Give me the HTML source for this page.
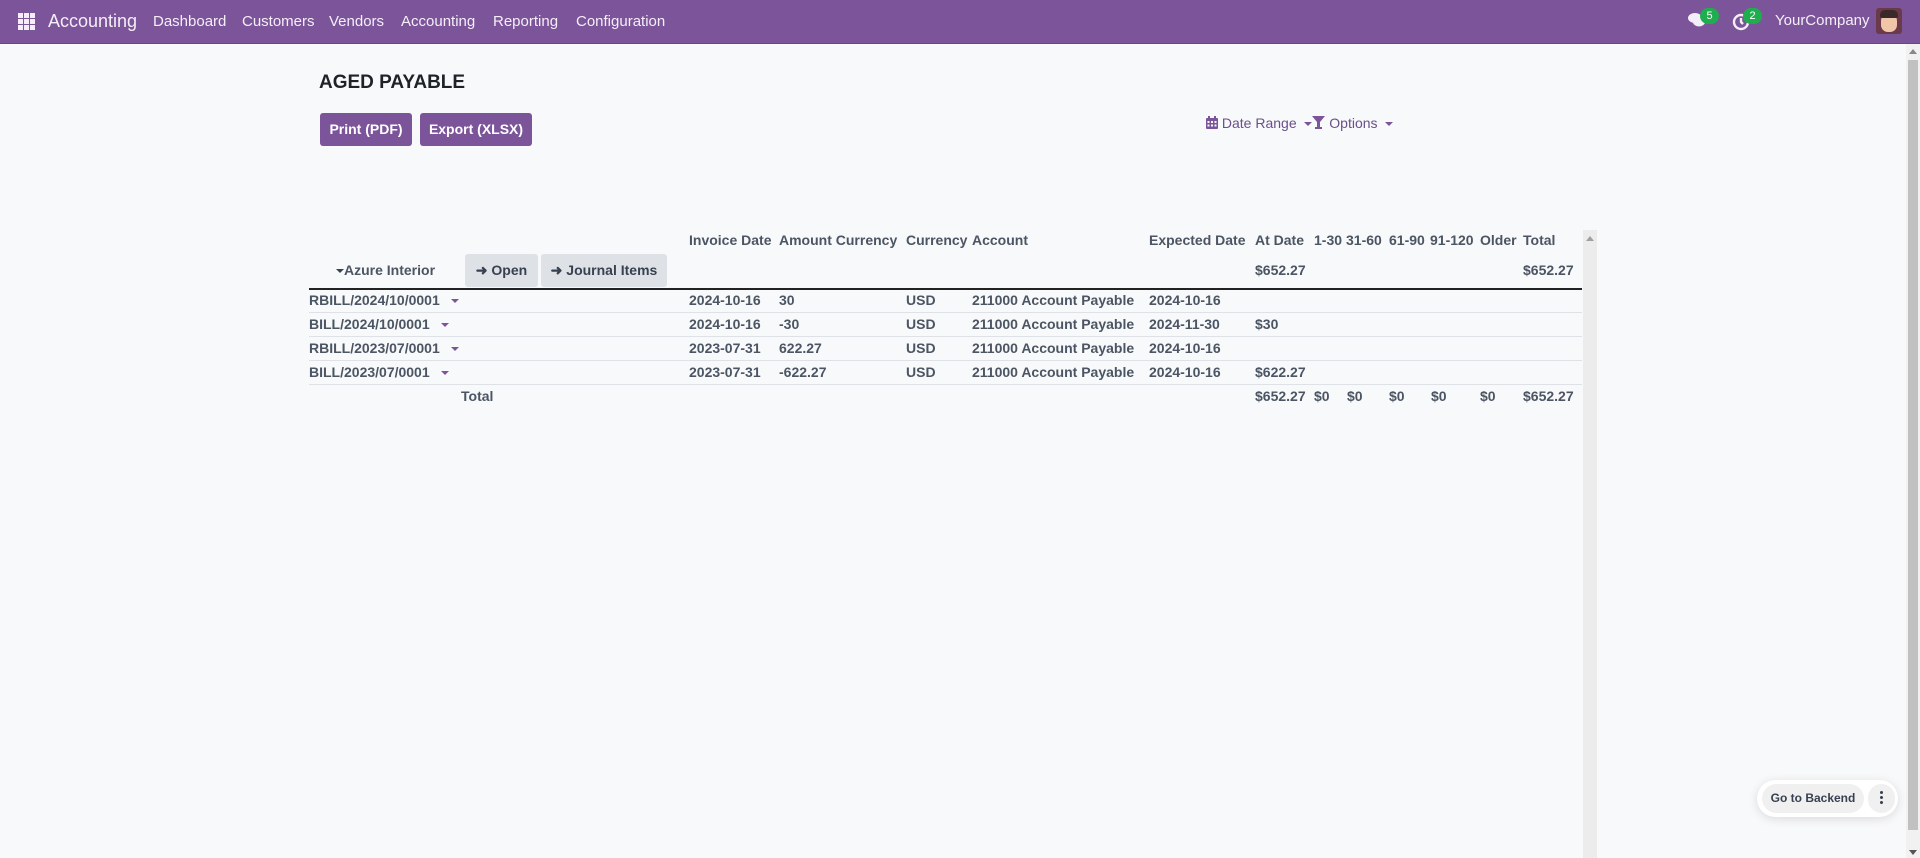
<!DOCTYPE html>
<html><head><meta charset="utf-8"><style>
*{box-sizing:border-box;margin:0;padding:0}
body{width:1920px;height:858px;overflow:hidden;background:#f8f9fa;font-family:"Liberation Sans",sans-serif;color:#374151;font-size:14px;position:relative}
.nav{position:absolute;left:0;top:0;width:1920px;height:44px;background:#7c5499;color:#fff;border-bottom:1px solid #6a4584}
.nav span{position:absolute;top:13px;font-size:15px;color:#f3eef7}
.a{position:absolute;white-space:nowrap}
.btn{position:absolute;background:#7c5499;color:#fff;font-weight:bold;border-radius:3px;font-size:14px;text-align:center;line-height:33px;height:33px;top:113px}
.gbtn{position:absolute;background:#dee2e6;color:#374151;font-weight:bold;border-radius:3px;top:254px;height:33px;line-height:33px;text-align:center}
.line{position:absolute;left:309px;width:1273px;height:1px;background:#dee2e6}
.caret{display:inline-block;width:0;height:0;border-left:4px solid transparent;border-right:4px solid transparent;border-top:4px solid #7c5499;vertical-align:middle}
.h{top:232px;font-weight:bold;color:#4b5563}
</style></head><body>
<div class="nav">
 <svg style="position:absolute;left:18px;top:13px" width="17" height="17" viewBox="0 0 17 17" fill="#f3eef7"><rect x="0" y="0" width="5" height="5"/><rect x="6" y="0" width="5" height="5"/><rect x="12" y="0" width="5" height="5"/><rect x="0" y="6" width="5" height="5"/><rect x="6" y="6" width="5" height="5"/><rect x="12" y="6" width="5" height="5"/><rect x="0" y="12" width="5" height="5"/><rect x="6" y="12" width="5" height="5"/><rect x="12" y="12" width="5" height="5"/></svg>
 <span style="left:48px;top:11px;font-size:18px">Accounting</span>
 <span style="left:153px">Dashboard</span>
 <span style="left:242px">Customers</span>
 <span style="left:329px">Vendors</span>
 <span style="left:401px">Accounting</span>
 <span style="left:493px">Reporting</span>
 <span style="left:576px">Configuration</span>
 <svg style="position:absolute;left:1688px;top:12px" width="18" height="16" viewBox="0 0 18 16" fill="#f3eef7"><ellipse cx="7" cy="6" rx="7" ry="5"/><ellipse cx="11" cy="10" rx="6" ry="4.5"/></svg>
 <div style="position:absolute;left:1700px;top:8px;width:19px;height:16px;border-radius:8px;background:#1fae4e;color:#fff;font-size:11px;text-align:center;line-height:16px">5</div>
 <svg style="position:absolute;left:1732px;top:13px" width="18" height="18" viewBox="0 0 18 18" fill="none" stroke="#f3eef7" stroke-width="2.4"><circle cx="9" cy="9" r="7"/><path d="M9 5v4l2 2"/></svg>
 <div style="position:absolute;left:1743px;top:8px;width:19px;height:16px;border-radius:8px;background:#1fae4e;color:#fff;font-size:11px;text-align:center;line-height:16px">2</div>
 <span style="left:1775px;top:12px">YourCompany</span>
 <div style="position:absolute;left:1876px;top:8px;width:26px;height:26px;border-radius:3px;background:#6b3a4a;overflow:hidden"><div style="position:absolute;left:5px;top:6px;width:16px;height:18px;border-radius:7px;background:#f1c6a8"></div><div style="position:absolute;left:4px;top:2px;width:18px;height:8px;border-radius:5px 5px 2px 2px;background:#3b2a2a"></div></div>
</div>

<div class="a" style="left:319px;top:72px;font-size:19px;font-weight:bold;color:#1f2328">AGED PAYABLE</div>
<div class="btn" style="left:320px;width:92px">Print (PDF)</div>
<div class="btn" style="left:420px;width:112px">Export (XLSX)</div>

<div class="a" style="left:1206px;top:115px;color:#6a4f8a;font-size:14px">
 <svg width="12" height="13" viewBox="0 0 12 13" style="vertical-align:-1px" fill="#7c5499"><rect x="0" y="2" width="12" height="11" rx="1"/><rect x="2" y="0" width="2" height="3"/><rect x="8" y="0" width="2" height="3"/><g fill="#f8f9fa"><rect x="1.5" y="5" width="2" height="2"/><rect x="5" y="5" width="2" height="2"/><rect x="8.5" y="5" width="2" height="2"/><rect x="1.5" y="8.5" width="2" height="2"/><rect x="5" y="8.5" width="2" height="2"/><rect x="8.5" y="8.5" width="2" height="2"/></g></svg>
 Date Range&nbsp; <span class="caret"></span><svg width="13" height="13" viewBox="0 0 13 13" style="vertical-align:-1px" fill="#7c5499"><path d="M0 0h13L8 6v5h2v2H3v-2h2V6z"/></svg> Options&nbsp; <span class="caret"></span>
</div>

<div class="a h" style="left:689px">Invoice Date</div>
<div class="a h" style="left:779px">Amount Currency</div>
<div class="a h" style="left:906px">Currency</div>
<div class="a h" style="left:972px">Account</div>
<div class="a h" style="left:1149px">Expected Date</div>
<div class="a h" style="left:1255px">At Date</div>
<div class="a h" style="left:1314px">1-30</div>
<div class="a h" style="left:1346px">31-60</div>
<div class="a h" style="left:1389px">61-90</div>
<div class="a h" style="left:1430px">91-120</div>
<div class="a h" style="left:1480px">Older</div>
<div class="a h" style="left:1523px">Total</div>

<div class="a" style="left:336px;top:262px;font-weight:bold;color:#4b5563"><span class="caret" style="border-top-color:#374151"></span>Azure Interior</div>
<div class="gbtn" style="left:465px;width:73px">&#10140; Open</div>
<div class="gbtn" style="left:541px;width:126px">&#10140; Journal Items</div>
<div class="a" style="left:1255px;top:262px;font-weight:bold;color:#4b5563">$652.27</div>
<div class="a" style="left:1523px;top:262px;font-weight:bold;color:#4b5563">$652.27</div>

<div class="line" style="top:288px;height:2px;background:#222"></div>
<div class="line" style="top:312px"></div>
<div class="line" style="top:336px"></div>
<div class="line" style="top:360px"></div>
<div class="line" style="top:384px"></div>

<div style="position:absolute;left:309px;top:292px;font-weight:bold;color:#4b5563">
<div class="a" style="left:0;top:0">RBILL/2024/10/0001 &nbsp; <span class="caret"></span></div>
<div class="a" style="left:0;top:24px">BILL/2024/10/0001 &nbsp; <span class="caret"></span></div>
<div class="a" style="left:0;top:48px">RBILL/2023/07/0001 &nbsp; <span class="caret"></span></div>
<div class="a" style="left:0;top:72px">BILL/2023/07/0001 &nbsp; <span class="caret"></span></div>
<div class="a" style="left:152px;top:96px">Total</div>

<div class="a" style="left:380px;top:0">2024-10-16</div><div class="a" style="left:470px;top:0">30</div><div class="a" style="left:597px;top:0">USD</div><div class="a" style="left:663px;top:0">211000 Account Payable</div><div class="a" style="left:840px;top:0">2024-10-16</div>
<div class="a" style="left:380px;top:24px">2024-10-16</div><div class="a" style="left:470px;top:24px">-30</div><div class="a" style="left:597px;top:24px">USD</div><div class="a" style="left:663px;top:24px">211000 Account Payable</div><div class="a" style="left:840px;top:24px">2024-11-30</div><div class="a" style="left:946px;top:24px">$30</div>
<div class="a" style="left:380px;top:48px">2023-07-31</div><div class="a" style="left:470px;top:48px">622.27</div><div class="a" style="left:597px;top:48px">USD</div><div class="a" style="left:663px;top:48px">211000 Account Payable</div><div class="a" style="left:840px;top:48px">2024-10-16</div>
<div class="a" style="left:380px;top:72px">2023-07-31</div><div class="a" style="left:470px;top:72px">-622.27</div><div class="a" style="left:597px;top:72px">USD</div><div class="a" style="left:663px;top:72px">211000 Account Payable</div><div class="a" style="left:840px;top:72px">2024-10-16</div><div class="a" style="left:946px;top:72px">$622.27</div>
<div class="a" style="left:946px;top:96px">$652.27</div><div class="a" style="left:1005px;top:96px">$0</div><div class="a" style="left:1038px;top:96px">$0</div><div class="a" style="left:1080px;top:96px">$0</div><div class="a" style="left:1122px;top:96px">$0</div><div class="a" style="left:1171px;top:96px">$0</div><div class="a" style="left:1214px;top:96px">$652.27</div>
</div>

<div style="position:absolute;left:1583px;top:230px;width:14px;height:628px;background:#ececec"></div>
<div style="position:absolute;left:1586px;top:236px;border-left:4px solid transparent;border-right:4px solid transparent;border-bottom:5px solid #a0a0a0"></div>

<div style="position:absolute;left:1906px;top:44px;width:14px;height:814px;background:#f1f1f1"></div>
<div style="position:absolute;left:1908px;top:60px;width:10px;height:770px;background:#c1c1c1"></div>
<div style="position:absolute;left:1909px;top:49px;border-left:4px solid transparent;border-right:4px solid transparent;border-bottom:5px solid #888"></div>
<div style="position:absolute;left:1909px;top:850px;border-left:4px solid transparent;border-right:4px solid transparent;border-top:5px solid #555"></div>

<div style="position:absolute;left:1757px;top:780px;width:141px;height:37px;border-radius:19px;background:#fff;box-shadow:0 2px 10px rgba(0,0,0,.12)"></div>
<div style="position:absolute;left:1762px;top:784px;width:102px;height:29px;border-radius:15px;background:#f0f0f0;font-weight:bold;font-size:12px;line-height:29px;text-align:center;color:#374151">Go to Backend</div>
<div style="position:absolute;left:1868px;top:784px;width:27px;height:29px;border-radius:15px;background:#f0f0f0"></div>
<div style="position:absolute;left:1880px;top:791px;width:3px;height:3px;border-radius:2px;background:#374151;box-shadow:0 5px 0 #374151,0 10px 0 #374151"></div>
</body></html>
